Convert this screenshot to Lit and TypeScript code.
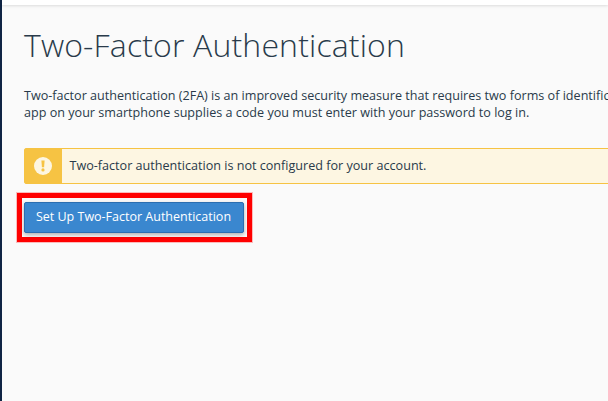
import { LitElement, html, css } from "lit";
import { customElement } from "lit/decorators.js";

@customElement("app-root")
export class AppRoot extends LitElement {
  static styles = css`
    :host {
      display: block;
      width: 608px;
      height: 401px;
      overflow: hidden;
      background: #fafafa;
      font-family: "Open Sans", sans-serif;
      color: #293a4a;
    }
    .frame {
      box-sizing: border-box;
      height: 401px;
      border-left: 2px solid #0f2444;
      display: flex;
      flex-direction: column;
    }
    .top {
      height: 5px;
      flex: none;
      background: #fff;
      box-shadow: 0 1px 3px rgba(0, 0, 0, 0.12);
    }
    .body {
      padding: 20px 0 0 22px;
      width: 640px;
    }
    h1 {
      margin: 0;
      font-size: 32px;
      font-weight: 300;
      line-height: 40px;
      letter-spacing: 0.15px;
      white-space: nowrap;
    }
    p {
      margin: 22px 0 0;
      font-size: 12.6px;
      line-height: 17px;
      white-space: nowrap;
    }
    .alert {
      margin-top: 27px;
      height: 36px;
      display: flex;
      align-items: stretch;
      box-sizing: border-box;
      border: 1px solid #f6c343;
      border-radius: 2px;
      background: #fdf6e2;
    }
    .alert-icon {
      box-sizing: border-box;
      width: 37px;
      padding-right: 2px;
      flex: none;
      background: #f6c343;
      display: flex;
      align-items: center;
      justify-content: center;
    }
    .alert-text {
      font-size: 12.6px;
      padding: 0 0 1px 7.5px;
      display: flex;
      align-items: center;
    }
    .mark {
      margin-top: 9px;
      margin-left: -7px;
      width: 235px;
      height: 49px;
      box-sizing: border-box;
      border: 5px solid #f00;
      box-shadow: 0 0 0 1px rgba(255, 0, 0, 0.25);
      padding-left: 2px;
      display: flex;
      align-items: center;
      background: #fafafa;
    }
    button {
      width: 220px;
      height: 31px;
      border: 1px solid #2b6eb0;
      border-radius: 2px;
      background: #3a87cf;
      color: #fff;
      font: 12.5px "Open Sans", sans-serif;
      padding: 0 1px 2px 0;
      box-shadow: 0 2px 4px rgba(0, 0, 0, 0.3);
    }
  `;

  render() {
    return html`
      <div class="frame">
        <div class="top"></div>
        <div class="body">
          <h1>Two-Factor Authentication</h1>
          <p>
            Two-factor authentication (2FA) is an improved security measure that requires two forms of identification: your password and a code.<br />
            app on your smartphone supplies a code you must enter with your password to log in.
          </p>
          <div class="alert">
            <div class="alert-icon">
              <svg width="18" height="18" viewBox="0 0 18 18">
                <circle cx="9" cy="9" r="9" fill="#fdf6e2"></circle>
                <path d="M7.4 3.6h3.2l-.5 6.6H7.9z" fill="#f6c343"></path>
                <circle cx="9" cy="12.9" r="1.6" fill="#f6c343"></circle>
              </svg>
            </div>
            <div class="alert-text">Two-factor authentication is not configured for your account.</div>
          </div>
          <div class="mark"><button>Set Up Two-Factor Authentication</button></div>
        </div>
      </div>
    `;
  }
}
